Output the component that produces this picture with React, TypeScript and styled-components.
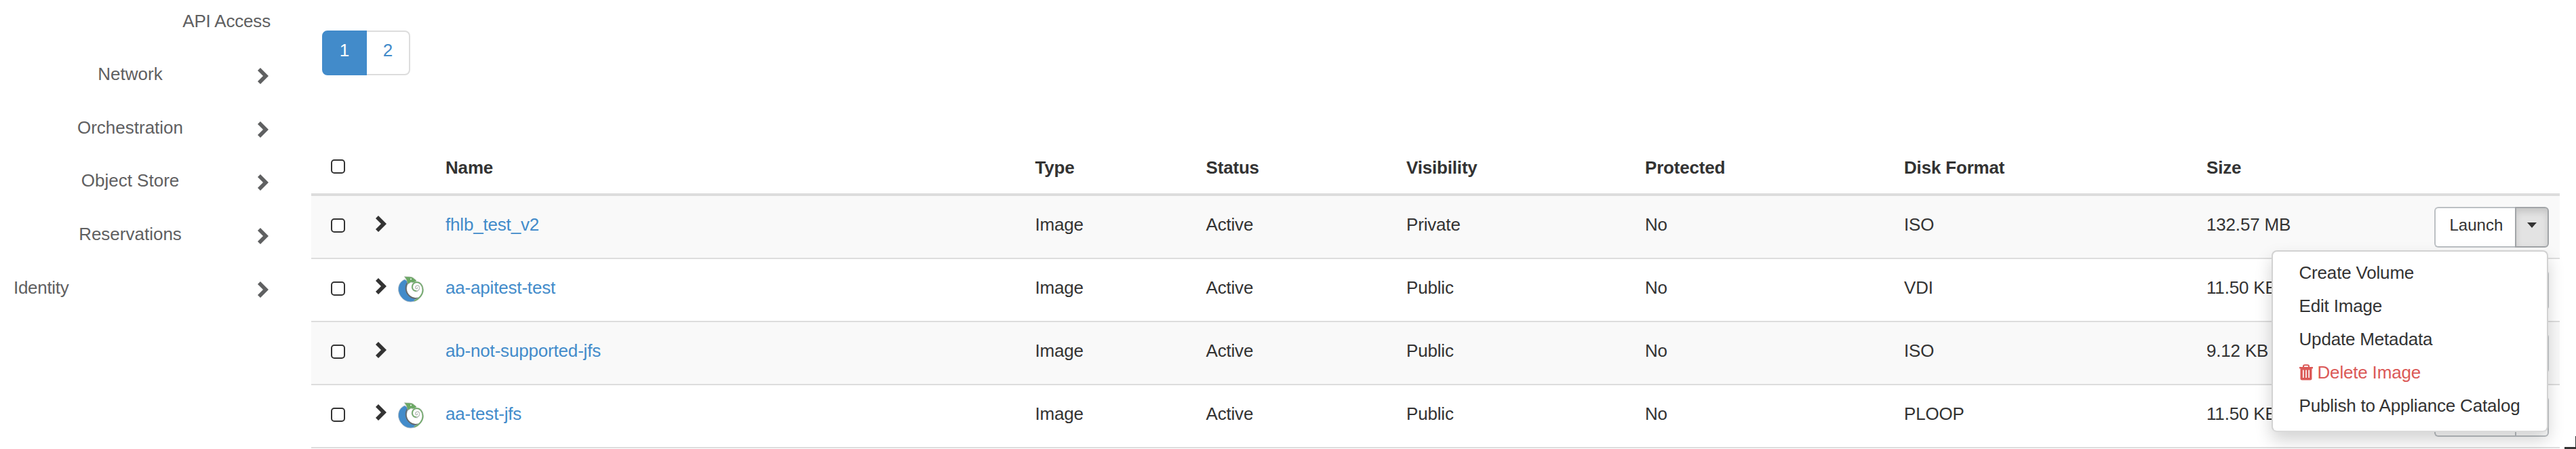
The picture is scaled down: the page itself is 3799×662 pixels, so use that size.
import React from 'react';
import styled, { createGlobalStyle, css } from 'styled-components';

const GlobalStyle = createGlobalStyle`
  * { box-sizing: border-box; }
  body {
    margin: 0;
    background: #fff;
    color: #333;
    font-family: "Liberation Sans", Arial, sans-serif;
    font-size: 26px;
    line-height: 36px;
    letter-spacing: -0.18px;
    overflow: hidden;
  }
`;

const Page = styled.div`
  position: relative;
  display: flex;
  width: 3799px;
  height: 662px;
  overflow: hidden;
`;

const Sidebar = styled.nav`
  flex: none;
  width: 459px;
  padding-top: 13px;
  color: #5f6061;
`;

const SubPanel = styled.div`
  height: 78px;
  padding-right: 60px;
  text-align: right;
`;

const NavRow = styled.div`
  display: flex;
  height: 78.7px;
  padding-right: 63px;
`;

const NavLabel = styled.span<{ $align?: 'left' }>`
  width: 380px;
  ${(p) => (p.$align === 'left'
    ? css`padding-left: 20px; letter-spacing: -0.3px;`
    : css`padding-left: 4px; text-align: center; letter-spacing: 0;`)}
`;

const NavChevron = styled.span`
  flex: none;
  width: 16px;
  padding-top: 9px;
  line-height: 0;
`;

const Main = styled.main`
  flex: none;
  width: 3316px;
`;

const Pagination = styled.div`
  display: flex;
  width: 130px;
  height: 66px;
  margin: 45px 0 109px 16px;
`;

const PageLink = styled.a<{ $active?: boolean }>`
  flex: 1;
  padding-top: 9px;
  text-align: center;
  border: 2px solid #ddd;
  border-left-width: 0;
  border-radius: 0 8px 8px 0;
  color: #428bca;
  ${(p) => p.$active && css`
    flex: 0 0 66px;
    color: #fff;
    background: #428bca;
    border-color: #428bca;
    border-left-width: 2px;
    border-radius: 8px 0 0 8px;
  `}
`;

const columns = css`
  display: grid;
  grid-template-columns: 95px 33px 70px 869.5px 252px 295.5px 352px 382px 446px 336px 169px;
`;

const HeadRow = styled.div`
  ${columns}
  height: 69px;
  padding-top: 9px;
  border-bottom: 4px solid #ddd;
  font-weight: 700;
`;

const Row = styled.div<{ $striped?: boolean }>`
  ${columns}
  height: 93px;
  padding-top: 24px;
  border-bottom: 2px solid #ddd;
  background: ${(p) => (p.$striped ? '#f9f9f9' : '#fff')};
`;

const Cell = styled.div`
  white-space: nowrap;
`;

const CheckCell = styled.div<{ $head?: boolean }>`
  padding: ${(p) => (p.$head ? '6px' : '9px')} 0 0 29px;
`;

const Checkbox = styled.div`
  width: 21px;
  height: 21px;
  border: 2px solid #333;
  border-radius: 5px;
  background: #fff;
`;

const ChevronCell = styled.div<{ $raised?: boolean }>`
  padding-top: ${(p) => (p.$raised ? 4 : 5)}px;
  line-height: 0;
`;

const LogoCell = styled.div`
  padding-top: 1px;
  line-height: 0;
`;

const NameLink = styled.a`
  color: #428bca;
  white-space: nowrap;
`;

const ButtonGroup = styled.div`
  position: relative;
  display: flex;
  width: 169px;
  height: 60px;
  margin: -8px 0 0 -0.5px;
`;

const LaunchButton = styled.div`
  width: 119px;
  padding: 7px 0 0 21px;
  border: 2px solid #bcc0c4;
  border-right: 0;
  border-radius: 6px 0 0 6px;
  background: #fff;
  font-size: 24px;
  letter-spacing: 0;
`;

const ToggleButton = styled.div<{ $open?: boolean }>`
  display: flex;
  justify-content: center;
  width: 50px;
  padding-top: 21px;
  border: 2px solid ${(p) => (p.$open ? '#a2a5a8' : '#bcc0c4')};
  border-radius: 0 6px 6px 0;
  background: ${(p) => (p.$open ? '#e3e3e3' : '#fff')};
  box-shadow: ${(p) => (p.$open ? 'inset 0 6px 10px rgba(0, 0, 0, 0.125)' : 'none')};
`;

const Caret = styled.span`
  width: 0;
  height: 0;
  border: 7px solid transparent;
  border-top: 8px solid #333;
  border-bottom: 0;
`;

const Menu = styled.div`
  position: absolute;
  top: 64px;
  right: 1px;
  z-index: 2;
  width: 408px;
  height: 268px;
  padding: 10px 0;
  border: 2px solid #d2d2d2;
  border-bottom-color: #dadada;
  border-radius: 8px;
  background: #fff;
  box-shadow: 0 12px 24px rgba(0, 0, 0, 0.175);
`;

const MenuItem = styled.div<{ $danger?: boolean }>`
  display: flex;
  height: 49px;
  padding: 0 0 0 39px;
  line-height: 42px;
  white-space: nowrap;
  color: ${(p) => (p.$danger ? '#db5957' : '#333')};
  svg { margin: 9px 7px 0 0; flex: none; }
`;

const WindowCorner = styled.div`
  position: absolute;
  right: 0;
  bottom: 0;
  width: 17px;
  height: 19px;
  border-right: 1px solid #333;
  border-bottom: 3px solid #333;
`;

const Chevron = () => (
  <svg width="16" height="24" viewBox="0 0 16 24">
    <path d="M0 4 L4 0 L16 12 L4 24 L0 20 L8 12 Z" fill="currentColor" />
  </svg>
);

const Trash = () => (
  <svg width="20" height="24" viewBox="0 0 20 24">
    <path d="M6 4.5V3Q6 1.2 8 1.2H12Q14 1.2 14 3V4.5" fill="none" stroke="currentColor" strokeWidth="2" />
    <rect x="0" y="4" width="20" height="2.4" fill="currentColor" />
    <path
      fillRule="evenodd"
      fill="currentColor"
      d="M1.5 6H18.5V21Q18.5 23.5 16 23.5H4Q1.5 23.5 1.5 21ZM5 8.5V20H6.6V8.5ZM9.2 8.5V20H10.8V8.5ZM13.4 8.5V20H15V8.5Z"
    />
  </svg>
);

const ChameleonLogo = () => (
  <svg width="38" height="39" viewBox="0 0 38 39">
    <path
      d="M10 5C3 8-.2 14 .7 22 2.500 32 11 38.300 19 38 24 37.800 28.500 36 31.500 32.500 26 33.500 20 32.500 16.500 28.500 11.500 23 11.500 15 16 9.500Z"
      fill="#428bca"
      stroke="#b5bcc0"
      strokeWidth=".8"
    />
    <path d="M14.500 9C10 15 11 23.500 16 28.500 20 32.500 26 33.500 31 32" fill="none" stroke="#65696b" strokeWidth="1.800" />
    <path d="M9.500 .8C14 1.500 19 .5 22 2.500L27 6.500 25 10 19 9 14.500 12 12.500 5.500Z" fill="#6aa963" stroke="#a9b2a8" strokeWidth=".7" />
    <circle cx="19" cy="4.500" r="1" fill="#fff" />
    <path d="M24 36.500C31 34 37 27 36.600 20 36.300 13 32 9 27.500 9 23 9.300 20.500 13 21 17 21.500 21 25.500 23 29 22" fill="none" stroke="#c6cbc7" strokeWidth="2.600" />
    <path d="M24 36.500C31 34 37 27 36.600 20 36.300 13 32 9 27.500 9 23 9.300 20.500 13 21 17 21.500 20.500 24 22 27 22" fill="none" stroke="#6aa963" strokeWidth="1.500" />
    <path d="M27 22C31 22 33 18 31 15 28.500 12.500 24.500 15 26 18 27.500 19.500 29.500 18 28.600 16.500" fill="none" stroke="#b4bab6" strokeWidth="1.200" />
  </svg>
);

const sections = ['Network', 'Orchestration', 'Object Store', 'Reservations'];

const headings = ['Name', 'Type', 'Status', 'Visibility', 'Protected', 'Disk Format', 'Size'];

const images = [
  { name: 'fhlb_test_v2', visibility: 'Private', format: 'ISO', size: '132.57 MB', logo: false },
  { name: 'aa-apitest-test', visibility: 'Public', format: 'VDI', size: '11.50 KB', logo: true },
  { name: 'ab-not-supported-jfs', visibility: 'Public', format: 'ISO', size: '9.12 KB', logo: false },
  { name: 'aa-test-jfs', visibility: 'Public', format: 'PLOOP', size: '11.50 KB', logo: true },
];

const ActionMenu = () => (
  <Menu>
    <MenuItem>Create Volume</MenuItem>
    <MenuItem>Edit Image</MenuItem>
    <MenuItem>Update Metadata</MenuItem>
    <MenuItem $danger><Trash />Delete Image</MenuItem>
    <MenuItem>Publish to Appliance Catalog</MenuItem>
  </Menu>
);

export default function App() {
  return (
    <Page>
      <GlobalStyle />
      <Sidebar>
        <SubPanel>API Access</SubPanel>
        {sections.map((s) => (
          <NavRow key={s}>
            <NavLabel>{s}</NavLabel>
            <NavChevron><Chevron /></NavChevron>
          </NavRow>
        ))}
        <NavRow>
          <NavLabel $align="left">Identity</NavLabel>
          <NavChevron><Chevron /></NavChevron>
        </NavRow>
      </Sidebar>
      <Main>
        <Pagination>
          <PageLink $active>1</PageLink>
          <PageLink>2</PageLink>
        </Pagination>
        <HeadRow>
          <CheckCell $head><Checkbox /></CheckCell>
          <Cell />
          <Cell />
          {headings.map((h) => <Cell key={h}>{h}</Cell>)}
        </HeadRow>
        {images.map((img, i) => (
          <Row key={img.name} $striped={i % 2 === 0}>
            <CheckCell><Checkbox /></CheckCell>
            <ChevronCell $raised={img.logo}><Chevron /></ChevronCell>
            <LogoCell>{img.logo && <ChameleonLogo />}</LogoCell>
            <Cell><NameLink>{img.name}</NameLink></Cell>
            <Cell>Image</Cell>
            <Cell>Active</Cell>
            <Cell>{img.visibility}</Cell>
            <Cell>No</Cell>
            <Cell>{img.format}</Cell>
            <Cell>{img.size}</Cell>
            <ButtonGroup>
              <LaunchButton>{i === 0 && 'Launch'}</LaunchButton>
              <ToggleButton $open={i === 0}>{i === 0 && <Caret />}</ToggleButton>
              {i === 0 && <ActionMenu />}
            </ButtonGroup>
          </Row>
        ))}
      </Main>
      <WindowCorner />
    </Page>
  );
}
